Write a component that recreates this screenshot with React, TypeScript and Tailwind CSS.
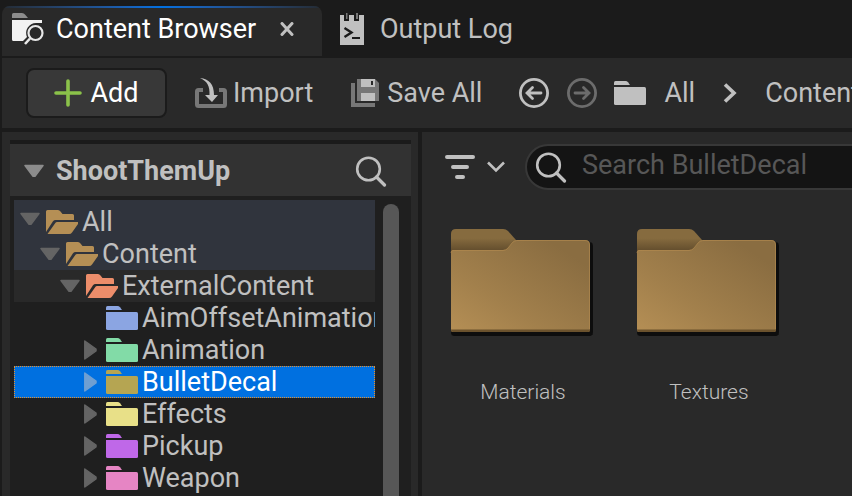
import { useState } from 'react';
import type { ReactNode } from 'react';

type TreeNode = {
  name: string;
  depth: string;
  color: string;
  state: 'open' | 'closed' | 'leaf';
  row: string;
};

const tree: TreeNode[] = [
  { name: 'All', depth: 'pl-1.5', color: '#b58f55', state: 'open', row: 'h-[38px] bg-[#30343d]' },
  { name: 'Content', depth: 'pl-6.5', color: '#b58f55', state: 'open', row: 'h-8 bg-[#30343d]' },
  { name: 'ExternalContent', depth: 'pl-11.5', color: '#ec8d6a', state: 'open', row: 'h-8 bg-[#292929]' },
  { name: 'AimOffsetAnimation', depth: 'pl-16.5', color: '#8ba5e2', state: 'leaf', row: 'h-8' },
  { name: 'Animation', depth: 'pl-16.5', color: '#82dba7', state: 'closed', row: 'h-8' },
  { name: 'BulletDecal', depth: 'pl-16.5', color: '#b5a552', state: 'closed', row: 'h-8' },
  { name: 'Effects', depth: 'pl-16.5', color: '#e8e088', state: 'closed', row: 'h-8' },
  { name: 'Pickup', depth: 'pl-16.5', color: '#bf68e8', state: 'closed', row: 'h-8' },
  { name: 'Weapon', depth: 'pl-16.5', color: '#e685c4', state: 'closed', row: 'h-8' },
];

const assets = ['Materials', 'Textures'];

const Arrow = ({ open, className }: { open: boolean; className: string }) => (
  <svg viewBox="0 0 20 20" className={`h-5 w-5 shrink-0 ${className}`} fill="currentColor" stroke="currentColor" strokeWidth="1.5" strokeLinejoin="round">
    {open ? <path d="M1 4.500h18L11 15.200h-2z" /> : <path d="M4.800 1v18L16 11v-2z" />}
  </svg>
);

const FolderIcon = ({ color, open = false }: { color: string; open?: boolean }) => (
  <svg viewBox="0 0 32 24" className="h-6 w-8 shrink-0" fill={color}>
    {open ? (
      <>
        <path d="M0 22V1.500Q0 0 1.500 0H12Q13.500 0 14.500 1.500L16.500 4H26.500Q28 4 28 5.500V10H9.500Q8 10 7 11.300z" />
        <path d="M1.500 24l8-11.200Q10 12 11 12H32v2l-6 8.500Q25 24 23 24z" />
      </>
    ) : (
      <>
        <path d="M0 4V1.500Q0 0 1.500 0H11.500Q13 0 14 1.200L16 4z" />
        <path d="M0 6H30.500Q32 6 32 7.500V22.500Q32 24 30.500 24H1.500Q0 24 0 22.500z" />
      </>
    )}
  </svg>
);

const SearchIcon = () => (
  <svg viewBox="0 0 32 32" className="h-8 w-8 shrink-0" fill="none" stroke="currentColor" strokeWidth="2.600">
    <circle cx="13.500" cy="14" r="11.300" />
    <path d="M21.500 22l8 8" strokeWidth="3.200" strokeLinecap="round" />
  </svg>
);

const NavArrow = ({ back = false }: { back?: boolean }) => (
  <svg viewBox="0 0 32 32" className="h-8 w-8" fill="none" stroke="currentColor" strokeWidth="2.800">
    <circle cx="16" cy="16" r="13.600" />
    {back ? (
      <path d="M23 16H9.500M14.500 10.500L9 16l5.500 5.500" strokeLinecap="round" />
    ) : (
      <path d="M9 16h13.500M17.500 10.500L23 16l-5.500 5.500" strokeLinecap="round" />
    )}
  </svg>
);

const BigFolder = ({ id }: { id: string }) => (
  <svg viewBox="0 0 144 110" className="h-[110px] w-36">
    <defs>
      <linearGradient id={`${id}-front`} x1="0" y1="1" x2="0.850" y2="0.150">
        <stop offset="0" stopColor="#b58f55" />
        <stop offset="0.400" stopColor="#a2804c" />
        <stop offset="1" stopColor="#8a6d41" />
      </linearGradient>
      <linearGradient id={`${id}-tab`} x1="0" y1="0" x2="0" y2="1">
        <stop offset="0.400" stopColor="#866b3f" />
        <stop offset="1" stopColor="#5f4a2b" />
      </linearGradient>
      <filter id={`${id}-soft`} x="-5%" y="-5%" width="110%" height="110%">
        <feGaussianBlur stdDeviation="0.600" />
      </filter>
    </defs>
    <path d="M1 20H136V14h3q4 0 4 4v86q0 4-3 4H4q-3 0-3-3z" fill="#0e0e0e" filter={`url(#${id}-soft)`} />
    <path d="M1 24V6Q1 1 6 1H53Q56 1 58 3L66 12V24z" fill={`url(#${id}-tab)`} />
    <path d="M1 25Q1 22 3 22H53Q56 22 58 20L62 15Q64 12 67 12H135Q140 12 140 17V102Q140 104 138 104H3Q1 104 1 102z" fill={`url(#${id}-front)`} />
    <path d="M1 25Q1 22.500 3 22.500H53Q56 22.500 58 20L62 15Q64 12.500 67 12.500H135Q139.500 12.500 139.500 17V101" fill="none" stroke="#b1894f" strokeOpacity="0.700" />
    <path d="M1 101.500H140V102Q140 104 138 104H3Q1 104 1 102z" fill="#6b522d" />
  </svg>
);

const ToolButton = ({ icon, label, className }: { icon: ReactNode; label: string; className: string }) => (
  <button className={`flex shrink-0 items-center whitespace-nowrap ${className}`}>
    {icon}
    {label}
  </button>
);

const App = () => {
  const [selected, setSelected] = useState('BulletDecal');
  const [query, setQuery] = useState('');

  return (
    <div className="flex h-screen flex-col overflow-hidden bg-[#1b1b1b] pl-0.5 font-['Roboto','Noto_Sans',sans-serif] text-[27px] leading-8 text-[#c0c0c0]">
      {/* tabs */}
      <div className="flex h-14 shrink-0 pt-1.5" role="tablist">
        <div className="flex w-80 shrink-0 flex-col overflow-hidden rounded-t-lg bg-[#292929]">
          <div className="h-0.5 shrink-0 bg-linear-to-r from-[#242b34] via-[#0070e0] to-[#242b34]" />
          <div className="flex items-center pt-[5px] pl-2.5">
            <button role="tab" aria-selected="true" className="flex items-center gap-3 whitespace-nowrap text-white">
              <svg viewBox="0 0 32 32" className="h-8 w-8 shrink-0">
                <path d="M0 5V1.500Q0 0 1.500 0H10q2 0 3 1.500L16 5z" fill="#8c8c8c" />
                <path d="M0 7H30V10H24a10 10 0 0 0-9 14l-4 4H1.500Q0 28 0 26.500z" fill="#f2f2f2" />
                <circle cx="23.500" cy="20" r="8.800" fill="#292929" />
                <circle cx="23.500" cy="20" r="7" fill="none" stroke="#e8e8e8" strokeWidth="2.200" />
                <path d="M18 25.500L13 31" stroke="#e8e8e8" strokeWidth="2.600" />
              </svg>
              Content Browser
            </button>
            <button aria-label="Close tab" className="ml-6">
              <svg viewBox="0 0 14 14" className="h-3.5 w-3.5" stroke="currentColor" strokeWidth="3" strokeLinecap="round">
                <path d="M2 1.500l10 11M12 1.500L2 12.500" />
              </svg>
            </button>
          </div>
        </div>
        <button role="tab" aria-selected="false" className="flex h-[46px] items-center gap-4 pl-[18px] whitespace-nowrap">
          <svg viewBox="0 0 24 32" className="h-8 w-6 shrink-0">
            <path d="M0 2H4V8H9V2H14V8H19V2H24V32H0z" fill="#c0c0c0" />
            <path d="M6 0h1.500v6H6zM16 0h2v6h-2z" fill="#777" />
            <path d="M4.500 15l7 4.500-7 4.500" fill="none" stroke="#1b1b1b" strokeWidth="2.400" />
            <path d="M12 25h8" stroke="#1b1b1b" strokeWidth="2" />
          </svg>
          Output Log
        </button>
      </div>

      {/* toolbar */}
      <div className="mt-0.5 flex h-[70px] shrink-0 items-center bg-[#292929] pl-6">
        <ToolButton
          label="Add"
          className="h-[50px] w-[141px] justify-center gap-2 rounded-lg border-2 border-[#1b1b1b] bg-[#383838] text-white"
          icon={
            <svg viewBox="0 0 28 28" className="h-7 w-7" stroke="#8bc24a" strokeWidth="3.600" strokeLinecap="round">
              <path d="M14 2v24M2 14h24" />
            </svg>
          }
        />
        <ToolButton
          label="Import"
          className="ml-7 gap-1.5"
          icon={
            <svg viewBox="0 0 32 32" className="h-8 w-8" fill="none">
              <path d="M8 13H3.500Q2 13 2 14.500V27.500Q2 29 3.500 29H28.500Q30 29 30 27.500V14.500Q30 13 28.500 13H24" stroke="#777" strokeWidth="4" />
              <path d="M5 1C14 2 19 7 19 18h4l-6 7-7-7h4.500C15 9 12 4 5 1z" fill="#c0c0c0" />
            </svg>
          }
        />
        <ToolButton
          label="Save All"
          className="ml-[38px] gap-2"
          icon={
            <svg viewBox="0 0 28 28" className="h-7 w-7">
              <path d="M0 4H4V24H24V28H0z" fill="#777" />
              <path d="M6 0H24l4 4V22H6z" fill="#777" />
              <path d="M10 0H24V8H10zM10 14H24V22H10z" fill="#c0c0c0" />
              <path d="M20 2h2v4h-2z" fill="#292929" />
            </svg>
          }
        />
        <button aria-label="Back" className="ml-9 shrink-0">
          <NavArrow back />
        </button>
        <button aria-label="Forward" className="ml-4 shrink-0 text-[#6c6c6c]">
          <NavArrow />
        </button>
        <nav aria-label="Path" className="ml-4 flex min-w-0 flex-1 items-center overflow-hidden">
          <FolderIcon color="#c0c0c0" />
          <button className="ml-[18px]">All</button>
          <svg viewBox="0 0 14 20" className="mx-7 h-5 w-3.5 shrink-0" fill="none" stroke="currentColor" strokeWidth="3.600">
            <path d="M2 1.500l9 8.500-9 8.500" />
          </svg>
          <button className="shrink-0">Content</button>
        </nav>
      </div>

      <div className="mt-1 flex min-h-0 flex-1 gap-1">
        {/* sources panel */}
        <aside className="w-[416px] shrink-0 bg-[#292929] px-2 pt-2">
          <div className="flex h-full w-[401px] flex-col bg-[#1f1f1f]">
            <div className="h-1 shrink-0 bg-[#1b1b1b]" />
            <div className="flex h-[52px] shrink-0 items-center bg-[#323232] pr-6 pl-3.5">
              <button className="flex flex-1 items-center gap-3 pt-0.5 font-bold">
                <Arrow open className="text-[#8c8c8c]" />
                ShootThemUp
              </button>
              <button aria-label="Search folders" className="pt-0.5">
                <SearchIcon />
              </button>
            </div>
            <div className="mt-1 flex min-h-0 flex-1 gap-2 pl-1">
              <div role="tree" aria-label="Folders" className="w-[361px] overflow-hidden">
                {tree.map((node) => {
                  const active = node.name === selected;
                  return (
                    <button
                      key={node.name}
                      role="treeitem"
                      aria-selected={active}
                      onClick={() => setSelected(node.name)}
                      className={`flex w-full items-center whitespace-nowrap ${node.row} ${active ? 'bg-[#0070e0] text-white outline-1 -outline-offset-1 outline-dotted outline-[#e8912a]' : ''}`}
                    >
                      <span className={`flex items-center ${node.depth}`}>
                        {node.state === 'leaf' ? (
                          <span className="w-5" />
                        ) : (
                          <Arrow open={node.state === 'open'} className={active ? 'text-[#6f9fd2]' : 'text-[#646464]'} />
                        )}
                      </span>
                      <span className={`flex items-center gap-1 pl-1.5 ${node.name === 'All' ? 'pt-1.5' : ''}`}>
                        <FolderIcon color={node.color} open={node.state === 'open'} />
                        {node.name}
                      </span>
                    </button>
                  );
                })}
              </div>
              <div className="mt-1 w-4 rounded-t-full bg-[#575757]" />
            </div>
          </div>
        </aside>

        {/* asset view */}
        <main className="flex min-w-0 flex-1 flex-col bg-[#292929] pt-3">
          <div className="flex shrink-0 items-center">
            <button aria-label="Filters" className="ml-[22px] flex shrink-0 items-center gap-[11px]">
              <svg viewBox="0 0 32 26" className="h-[26px] w-8" stroke="currentColor" strokeWidth="4" strokeLinecap="round">
                <path d="M3 3h26M9 13h14M13 23h6" />
              </svg>
              <svg viewBox="0 0 18 12" className="h-3 w-[18px]" fill="none" stroke="currentColor" strokeWidth="2.600">
                <path d="M1 1.500l8 8 8-8" />
              </svg>
            </button>
            <label className="-mr-8 ml-5 flex h-[46px] min-w-0 flex-1 items-center gap-[15px] rounded-full border-2 border-[#383838] bg-[#141414] pl-2">
              <SearchIcon />
              <input
                type="text"
                aria-label="Search assets"
                value={query}
                onChange={(e) => setQuery(e.target.value)}
                placeholder="Search BulletDecal"
                className="min-w-0 flex-1 bg-transparent pb-1 outline-none placeholder:text-[#575757]"
              />
            </label>
          </div>
          <div className="flex flex-wrap gap-[42px] pt-[38px] pl-7">
            {assets.map((name) => (
              <button key={name} className="flex w-36 flex-col items-center gap-[38px] text-[21px] font-light">
                <BigFolder id={name} />
                <span className="pl-0.5">{name}</span>
              </button>
            ))}
          </div>
        </main>
      </div>
    </div>
  );
};

export default App;
